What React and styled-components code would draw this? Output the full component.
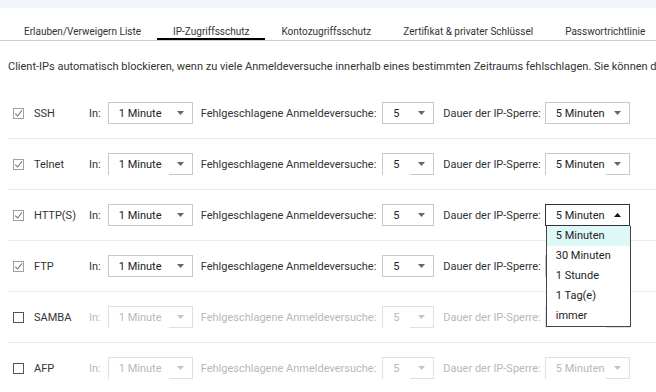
import React from 'react'
import styled, { createGlobalStyle } from 'styled-components'

const Global = createGlobalStyle`
  body {
    margin: 0;
    background: #fff;
    font-family: Roboto, "Liberation Sans", Arial, sans-serif;
    color: #333;
    overflow: hidden;
  }
`;

const Page = styled.div`
  width: 656px;
  height: 392px;
  overflow: hidden;
  font-size: 11px;
`;

const TopBand = styled.div`
  height: 8px;
  background: #f3f5fc;
`;

const TabBar = styled.div`
  display: flex;
  padding-left: 8px;
  border-bottom: 1px solid #cfcfcf;
  white-space: nowrap;
`;

const Tab = styled.div`
  padding: 17px 16px 0;
  line-height: 13px;
  font-size: 10px;
  color: #333;
  border-bottom: 2px solid ${p => (p.$active ? '#000' : 'transparent')};
`;

const Intro = styled.p`
  margin: 18px 0 0 8px;
  line-height: 16px;
  white-space: nowrap;
`;

const List = styled.div`
  margin-top: 13px;
  padding-left: 8px;
`;

const Row = styled.div`
  display: flex;
  align-items: center;
  height: 50px;
  border-bottom: 1px solid #e9e9e9;
  white-space: nowrap;
  color: ${p => (p.$off ? '#b8b8b8' : '#333')};
`;

const Check = styled.span`
  width: 11px;
  height: 11px;
  box-sizing: border-box;
  margin: 0 10px 0 5px;
  border: 1px solid ${p => (p.$checked ? '#a0a0a0' : '#555')};
  display: flex;
  align-items: center;
  justify-content: center;
`;

const Name = styled.span`
  width: 55px;
  color: #333;
`;

const Label = styled.span`
  margin-right: ${p => p.$gap}px;
`;

const Select = styled.div`
  position: relative;
  display: flex;
  width: ${p => p.$w}px;
  height: 22px;
  box-sizing: border-box;
  margin-right: ${p => p.$gap || 0}px;
  border: 1px solid ${p => (p.$open ? '#333' : p.$off ? '#e0e0e0' : '#c8c8c8')};
  border-bottom: none;
  color: ${p => (p.$off ? '#b8b8b8' : '#222')};
`;

const Value = styled.span`
  flex: 1;
  padding-left: 10px;
  line-height: 21px;
  border-bottom: 1px solid ${p => (p.$cut ? 'transparent' : p.$line)};
`;

const Arrow = styled.span`
  width: 23px;
  display: flex;
  align-items: center;
  justify-content: center;
  border-bottom: 1px solid ${p => p.$line};
`;

const Menu = styled.ul`
  position: absolute;
  z-index: 2;
  top: 100%;
  left: 0;
  width: 85px;
  box-sizing: border-box;
  margin: 0;
  padding: 0;
  list-style: none;
  background: #fff;
  border: 1px solid #444;
  border-top: none;
`;

const MenuItem = styled.li`
  height: 20px;
  line-height: 20px;
  padding-left: 9px;
  color: #222;
  background: ${p => (p.$hover ? '#def8f8' : 'transparent')};
`;

const Tick = () => (
  <svg width="9" height="9" viewBox="0 0 9 9">
    <path d="M1.2 4.6 L3.6 7 L8 1.4" fill="none" stroke="#7a7a7a" strokeWidth="1.1" />
  </svg>
);

const Caret = ({ up, color }) => (
  <svg width="7" height="4" viewBox="0 0 7 4">
    <path d={up ? 'M0 4 L3.5 0 L7 4 Z' : 'M0 0 L7 0 L3.5 4 Z'} fill={color} />
  </svg>
);

const Dropdown = ({ w, gap, value, off, cut, open, options }) => {
  const line = open ? '#333' : off ? '#e0e0e0' : '#c8c8c8';
  return (
    <Select $w={w} $gap={gap} $off={off} $open={open}>
      <Value $cut={cut} $line={line}>{value}</Value>
      <Arrow $line={line}>
        <Caret up={open} color={open ? '#111' : off ? '#c4c4c4' : '#666'} />
      </Arrow>
      {open && (
        <Menu>
          {options.map((o, i) => (
            <MenuItem key={o} $hover={i === 0}>{o}</MenuItem>
          ))}
        </Menu>
      )}
    </Select>
  );
};

const tabs = [
  'Erlauben/Verweigern Liste',
  'IP-Zugriffsschutz',
  'Kontozugriffsschutz',
  'Zertifikat & privater Schlüssel',
  'Passwortrichtlinie',
];

const services = [
  { name: 'SSH', checked: true },
  { name: 'Telnet', checked: true, cut: true },
  { name: 'HTTP(S)', checked: true, open: true },
  { name: 'FTP', checked: true },
  { name: 'SAMBA', checked: false, cut: true },
  { name: 'AFP', checked: false, cut: true },
];

const durations = ['5 Minuten', '30 Minuten', '1 Stunde', '1 Tag(e)', 'immer'];

export default function App() {
  return (
    <Page>
      <Global />
      <TopBand />
      <TabBar>
        {tabs.map((t, i) => (
          <Tab key={t} $active={i === 1}>{t}</Tab>
        ))}
      </TabBar>
      <Intro>
        Client-IPs automatisch blockieren, wenn zu viele Anmeldeversuche innerhalb eines bestimmten Zeitraums fehlschlagen. Sie können die
      </Intro>
      <List>
        {services.map(s => {
          const off = !s.checked;
          return (
            <Row key={s.name} $off={off}>
              <Check $checked={s.checked}>{s.checked && <Tick />}</Check>
              <Name>{s.name}</Name>
              <Label $gap={7}>In:</Label>
              <Dropdown w={85} gap={8} value="1 Minute" off={off} cut={s.cut} />
              <Label $gap={6}>Fehlgeschlagene Anmeldeversuche:</Label>
              <Dropdown w={52} gap={9} value="5" off={off} cut={s.cut} />
              <Label $gap={4}>Dauer der IP-Sperre:</Label>
              <Dropdown
                w={85}
                value="5 Minuten"
                off={off}
                cut={s.cut}
                open={s.open}
                options={durations}
              />
            </Row>
          );
        })}
      </List>
    </Page>
  );
}
